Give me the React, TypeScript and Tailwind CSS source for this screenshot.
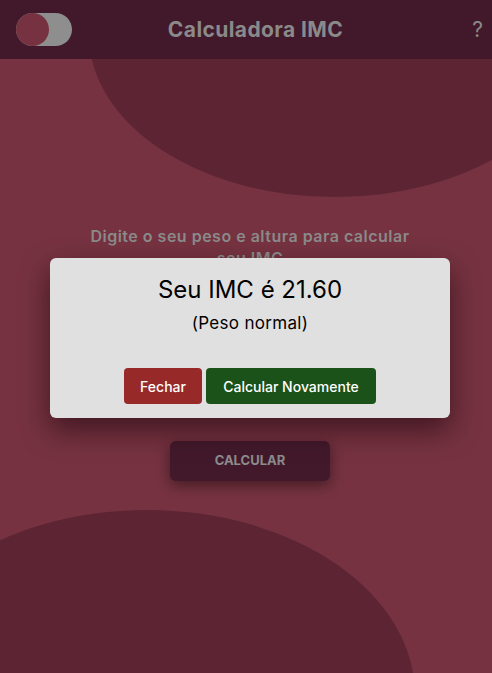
const font = { fontFamily: "Inter, 'Noto Sans', sans-serif" };

function Toggle() {
  return (
    <div className="w-[56px] h-[33px] rounded-full bg-[#8e8e8e] flex items-center">
      <div className="w-[33px] h-[33px] rounded-full bg-[#763240]" />
    </div>
  );
}

function ResultModal() {
  return (
    <div className="absolute inset-0 flex items-start justify-center pl-[8px] pt-[258px]">
      <div className="w-[400px] h-[160px] bg-[#e0e0e0] rounded-md shadow-[0_12px_28px_rgba(20,0,10,0.55)] flex flex-col items-center">
        <h2 className="mt-[17px] text-[24px] leading-[30px] text-black font-normal">Seu IMC é 21.60</h2>
        <p className="mt-[7px] text-[17px] leading-[22px] text-black tracking-[0.3px]">(Peso normal)</p>
        <div className="mt-[34px] flex gap-1">
          <button className="w-[78px] h-[36px] rounded bg-[#982929] text-white text-[14px] font-medium">
            Fechar
          </button>
          <button className="w-[170px] h-[36px] rounded bg-[#1a5219] text-white text-[14px] font-medium">
            Calcular Novamente
          </button>
        </div>
      </div>
    </div>
  );
}

export default function App() {
  return (
    <div className="relative w-[492px] h-[673px] overflow-hidden bg-[#763240]" style={font}>
      {/* formas decorativas */}
      <div className="absolute left-[89px] top-[-127px] w-[492px] h-[324px] rounded-[50%] bg-[#5d2534]" />
      <div className="absolute left-[-121px] top-[510px] w-[536px] h-[370px] rounded-[50%] bg-[#5d2534]" />

      <header className="relative z-10 h-[59px] bg-[#42192b] grid grid-cols-[1fr_auto_1fr] items-center pl-4 pr-[9px]">
        <Toggle />
        <h1 className="pl-[12px] text-[21px] tracking-[0.4px] font-bold text-[#8a8a8a]">Calculadora IMC</h1>
        <span className="justify-self-end text-[21px] text-[#8a8a8a]">?</span>
      </header>

      <main className="relative z-10 flex flex-col items-center pl-[8px]">
        <p className="mt-[166px] w-[330px] text-center text-[16px] leading-[22px] font-semibold tracking-[0.5px] text-[#8a8a8a]">
          Digite o seu peso e altura para calcular seu IMC
        </p>
        <div className="h-[172px]" />
        <button className="w-[160px] h-[40px] rounded-md bg-[#42192b] text-[13px] font-bold text-[#8c8c8c] shadow-[0_4px_14px_rgba(0,0,0,0.45)]">
          CALCULAR
        </button>
      </main>

      <div className="absolute inset-0 z-20">
        <ResultModal />
      </div>
    </div>
  );
}
